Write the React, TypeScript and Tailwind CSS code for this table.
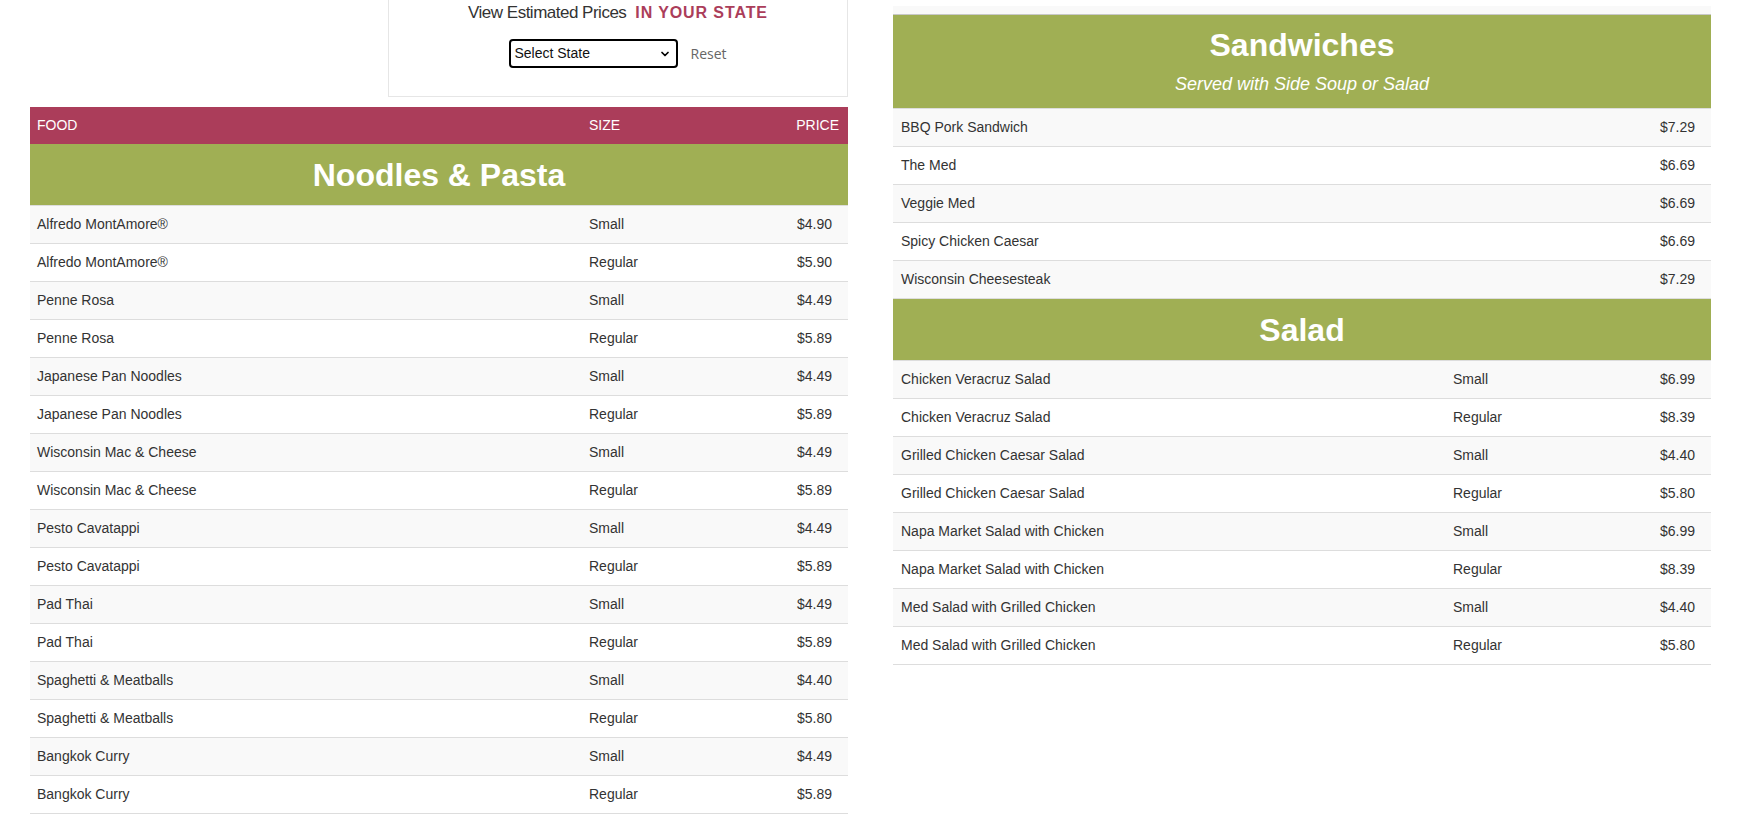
import { ChevronDown } from "lucide-react"

type Item = { name: string; size?: string; price: string }

const noodles: Item[] = [
  { name: "Alfredo MontAmore®", size: "Small", price: "$4.90" },
  { name: "Alfredo MontAmore®", size: "Regular", price: "$5.90" },
  { name: "Penne Rosa", size: "Small", price: "$4.49" },
  { name: "Penne Rosa", size: "Regular", price: "$5.89" },
  { name: "Japanese Pan Noodles", size: "Small", price: "$4.49" },
  { name: "Japanese Pan Noodles", size: "Regular", price: "$5.89" },
  { name: "Wisconsin Mac & Cheese", size: "Small", price: "$4.49" },
  { name: "Wisconsin Mac & Cheese", size: "Regular", price: "$5.89" },
  { name: "Pesto Cavatappi", size: "Small", price: "$4.49" },
  { name: "Pesto Cavatappi", size: "Regular", price: "$5.89" },
  { name: "Pad Thai", size: "Small", price: "$4.49" },
  { name: "Pad Thai", size: "Regular", price: "$5.89" },
  { name: "Spaghetti & Meatballs", size: "Small", price: "$4.40" },
  { name: "Spaghetti & Meatballs", size: "Regular", price: "$5.80" },
  { name: "Bangkok Curry", size: "Small", price: "$4.49" },
  { name: "Bangkok Curry", size: "Regular", price: "$5.89" },
]

const sandwiches: Item[] = [
  { name: "BBQ Pork Sandwich", price: "$7.29" },
  { name: "The Med", price: "$6.69" },
  { name: "Veggie Med", price: "$6.69" },
  { name: "Spicy Chicken Caesar", price: "$6.69" },
  { name: "Wisconsin Cheesesteak", price: "$7.29" },
]

const salads: Item[] = [
  { name: "Chicken Veracruz Salad", size: "Small", price: "$6.99" },
  { name: "Chicken Veracruz Salad", size: "Regular", price: "$8.39" },
  { name: "Grilled Chicken Caesar Salad", size: "Small", price: "$4.40" },
  { name: "Grilled Chicken Caesar Salad", size: "Regular", price: "$5.80" },
  { name: "Napa Market Salad with Chicken", size: "Small", price: "$6.99" },
  { name: "Napa Market Salad with Chicken", size: "Regular", price: "$8.39" },
  { name: "Med Salad with Grilled Chicken", size: "Small", price: "$4.40" },
  { name: "Med Salad with Grilled Chicken", size: "Regular", price: "$5.80" },
]

function Rows({ items, pad }: { items: Item[]; pad: string }) {
  return (
    <>
      {items.map((item, i) => (
        <div
          key={`${item.name}-${i}`}
          className={`flex items-center h-[38px] border-b border-[#dddddd] pr-4 text-[14px] text-[#333333] ${pad} ${
            i % 2 === 0 ? "bg-[#f9f9f9]" : "bg-white"
          }`}
        >
          <div className="w-[552px] shrink-0">{item.name}</div>
          <div className="flex-1">{item.size ?? ""}</div>
          <div className="text-right">{item.price}</div>
        </div>
      ))}
    </>
  )
}

function Band({ title }: { title: string }) {
  return (
    <div className="h-[62px] flex items-center justify-center bg-[#a0af54] border-b border-[#dddddd] text-white text-[32px] font-bold leading-[36px]">
      {title}
    </div>
  )
}

function StateBox() {
  return (
    <div className="ml-auto w-[460px] h-[97px] border border-t-0 border-[#e6e6e6] flex flex-col items-center">
      <div className="leading-[26px] whitespace-nowrap">
        <span className="text-[17px] tracking-[-0.5px] text-[#333333]">View Estimated Prices</span>
        <span className="ml-[9px] text-[16px] font-bold tracking-[0.9px] text-[#ab3d5a]">IN YOUR STATE</span>
      </div>
      <div className="mt-[13px] flex items-center gap-[12px]">
        <div className="relative w-[169px] h-[29px]">
          <select className="appearance-none w-full h-full border-2 border-black rounded-[4px] bg-white pl-[3px] text-[14px] text-[#111111]">
            <option>Select State</option>
          </select>
          <ChevronDown
            className="absolute right-[7px] top-[9px] w-[12px] h-[12px] text-black pointer-events-none"
            strokeWidth={3.5}
          />
        </div>
        <span className="font-['Open_Sans',sans-serif] text-[14px] text-[#666666]">Reset</span>
      </div>
    </div>
  )
}

export default function App() {
  return (
    <div className="w-[1748px] h-[837px] overflow-hidden bg-white font-['Liberation_Sans',Arial,sans-serif]">
      <div className="flex pl-[30px] gap-[45px]">
        <div className="w-[818px] flex flex-col">
          <StateBox />
          <div className="mt-[10px]">
            <div className="h-[37px] flex items-center bg-[#ab3d5a] text-white text-[14px] pl-[7px] pr-[9px]">
              <div className="w-[552px] shrink-0">FOOD</div>
              <div className="flex-1">SIZE</div>
              <div>PRICE</div>
            </div>
            <Band title="Noodles & Pasta" />
            <Rows items={noodles} pad="pl-[7px]" />
          </div>
        </div>

        <div className="w-[818px] flex flex-col pt-[6px]">
          <div className="h-[9px] bg-[#f9f9f9] border-b border-[#c8c8c8]" />
          <div className="bg-[#a0af54] border-b border-[#dddddd] h-[94px] pt-[12px] flex flex-col items-center text-white">
            <div className="text-[32px] font-bold leading-[36px]">Sandwiches</div>
            <div className="mt-[9px] text-[18px] italic leading-[24px]">Served with Side Soup or Salad</div>
          </div>
          <Rows items={sandwiches} pad="pl-[8px]" />
          <Band title="Salad" />
          <Rows items={salads} pad="pl-[8px]" />
        </div>
      </div>
    </div>
  )
}
